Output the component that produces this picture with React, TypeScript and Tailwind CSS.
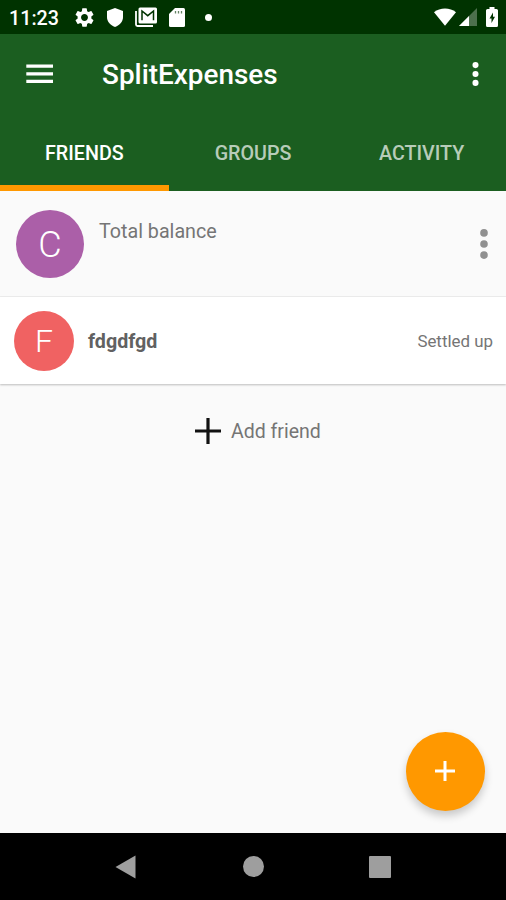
import { useState } from 'react';
import { MdSettings } from 'react-icons/md';

const tabs = ['FRIENDS', 'GROUPS', 'ACTIVITY'];

const friends = [
  { id: 1, name: 'fdgdfgd', status: 'Settled up' },
];

function StatusBar() {
  return (
    <div className="flex h-[34px] items-center bg-[#003300] text-white">
      <span className="ml-[9px] w-[64px] pt-[3px] text-[19.7px] leading-none font-medium">11:23</span>
      <MdSettings className="size-[23px] shrink-0" />
      <svg className="ml-[11px] h-[19px] w-4 shrink-0" viewBox="0 0 16 19" fill="currentColor">
        <path d="M8 0 16 3v6c0 4.6-3.2 8.300-8 10-4.800-1.700-8-5.400-8-10V3Z" />
      </svg>
      <svg className="ml-[12px] h-5 w-[22px] shrink-0" viewBox="0 0 22 20">
        <path d="M1 4v13.500q0 1.500 1.500 1.500H18" fill="none" stroke="#fff" strokeWidth="1.800" />
        <rect x="3.500" y="0.500" width="18.500" height="16" rx="1.500" fill="#fff" />
        <path d="M7 13.300V4l5.750 4.700 5.750-4.700v9.300" fill="none" stroke="#003300" strokeWidth="1.500" />
      </svg>
      <svg className="ml-[12px] h-[19px] w-4 shrink-0" viewBox="0 0 16 19">
        <path d="M6 0h8.500Q16 0 16 1.500v16q0 1.500-1.500 1.500h-13Q0 19 0 17.500V6Z" fill="#fff" />
        <path d="M6.500 3v2.500M9.500 3v2.500M12.500 3v2.500" stroke="#003300" strokeWidth="1.300" opacity="0.600" />
      </svg>
      <span className="ml-[20px] size-[7px] rounded-full bg-white" />
      <svg className="ml-auto h-[18px] w-[22px] shrink-0" viewBox="0 0 22 18" fill="#fff">
        <path d="M0 4.200Q4.800 0.500 11 0.500T22 4.200L11 17.800Z" />
      </svg>
      <svg className="ml-[3px] h-[18px] w-[18px] shrink-0" viewBox="0 0 18 18" fill="#fff">
        <path d="M0 18 18 0v18Z" opacity="0.300" />
        <path d="M0 18 10 8v10Z" />
      </svg>
      <svg className="mr-[8px] ml-[9px] h-5 w-3 shrink-0" viewBox="0 0 12 20">
        <path d="M3.500 0h5v2h2Q12 2 12 3.500v15q0 1.500-1.500 1.500h-9Q0 20 0 18.500v-15Q0 2 1.500 2h2Z" fill="#fff" />
        <path d="M7 5.500 3.500 11.500h2v4.500l3.500-6.300H7Z" fill="#003300" />
      </svg>
    </div>
  );
}

function Dots({ className }: { className: string }) {
  return (
    <svg className={className} viewBox="0 0 8 30" fill="currentColor">
      <circle cx="4" cy="3.900" r="3.800" />
      <circle cx="4" cy="15" r="3.800" />
      <circle cx="4" cy="26.100" r="3.800" />
    </svg>
  );
}

export default function App() {
  const [active, setActive] = useState(0);

  return (
    <div className="flex h-[900px] w-[506px] flex-col overflow-hidden bg-[#fafafa] font-[Roboto,sans-serif]">
      <StatusBar />

      <header className="bg-[#1b5e20] text-white">
        <div className="flex h-[80px] items-center">
          <button className="ml-[26px]">
            <svg className="h-[20px] w-[27px]" viewBox="0 0 27 20" stroke="#fff" strokeWidth="3.300">
              <path d="M0.300 2.200h26.700M0.300 9.800h26.700M0.300 17.400h26.700" />
            </svg>
          </button>
          <h1 className="ml-[49px] pt-[2px] text-[27.9px] leading-none font-medium">SplitExpenses</h1>
          <button className="mr-[27px] ml-auto">
            <Dots className="h-[24px] w-[7px]" />
          </button>
        </div>
        <nav className="flex h-[77px]">
          {tabs.map((tab, i) => (
            <button
              key={tab}
              onClick={() => setActive(i)}
              className={`flex flex-1 items-center justify-center border-b-[6px] pt-[9px] text-[19.7px] font-medium ${i === active ? 'border-[#ff9800] text-white' : 'border-transparent text-white/70'}`}
            >
              {tab}
            </button>
          ))}
        </nav>
      </header>

      <main className="flex flex-1 flex-col">
        <section className="flex h-[106px] items-center border-b border-[#eeeeee] pr-[18px] pl-4">
          <div className="flex size-[68px] items-center justify-center rounded-full bg-[#ab5fa8] pt-[2px] text-[36px] font-light text-white">C</div>
          <p className="mb-[23px] ml-[15px] text-[19.7px] leading-6 text-[#757575]">Total balance</p>
          <Dots className="ml-auto h-[30px] w-2 text-[#909090]" />
        </section>

        {friends.map(friend => (
          <section key={friend.id} className="flex h-[87px] items-center bg-white pr-[13px] pl-[14px] shadow-[0_1px_2px_rgba(0,0,0,0.25)]">
            <div className="flex size-[60px] items-center justify-center rounded-full bg-[#f06262] text-[32px] font-light text-white">{friend.name[0].toUpperCase()}</div>
            <p className="ml-[14px] pt-[2px] text-[19.7px] font-bold text-[#616161]">{friend.name}</p>
            <p className="ml-auto pt-[2px] text-[16.9px] text-[#757575]">{friend.status}</p>
          </section>
        ))}

        <button className="mt-[33px] ml-[195px] flex h-[27px] items-center">
          <svg className="size-[26px]" viewBox="0 0 26 26" stroke="#111" strokeWidth="3.200">
            <path d="M13 0v26M0 13h26" />
          </svg>
          <span className="ml-[10px] pt-[2px] text-[19.5px] text-[#757575]">Add friend</span>
        </button>

        <button className="mt-auto mr-[21.5px] mb-[22.5px] flex size-[79px] items-center justify-center self-end rounded-full bg-[#ff9800] shadow-[0_5px_8px_rgba(0,0,0,0.2)]">
          <svg className="size-[20px]" viewBox="0 0 20 20" stroke="#fff" strokeWidth="3">
            <path d="M10 0v20M0 10h20" />
          </svg>
        </button>
      </main>

      <footer className="flex h-[67px] items-center bg-black text-[#9e9e9e]">
        <svg className="ml-[115px] h-[24px] w-[21px]" viewBox="0 0 21 24" fill="currentColor">
          <path d="M0.500 12 20.500 0.500v23Z" />
        </svg>
        <span className="ml-[107px] size-[21px] rounded-full bg-current" />
        <span className="ml-[105px] size-[22px] rounded-[1px] bg-current" />
      </footer>
    </div>
  );
}
